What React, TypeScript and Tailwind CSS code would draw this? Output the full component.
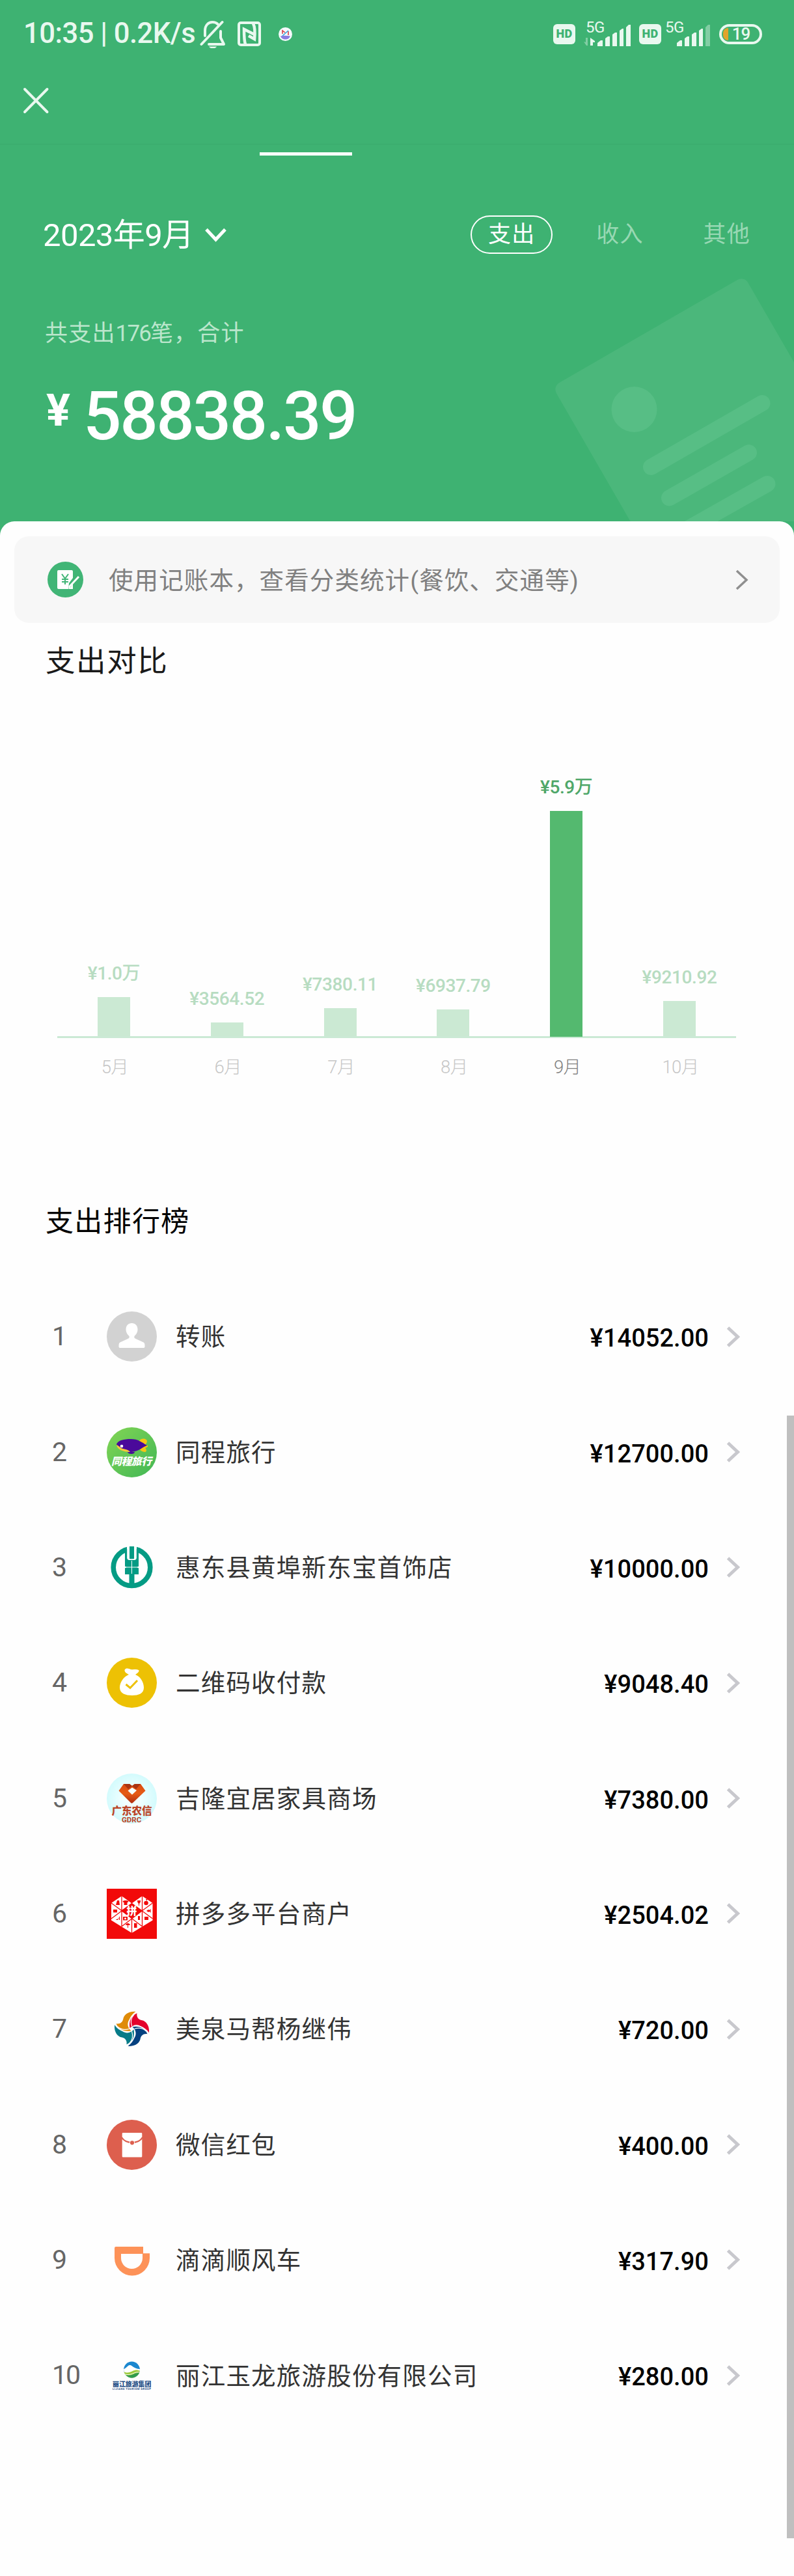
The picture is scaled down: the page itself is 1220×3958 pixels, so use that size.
import React from "react";

const FONT = "font-['Roboto','Noto_Sans_CJK_SC',sans-serif]";

/* ---------- status bar ---------- */

function MutedBell() {
  return (
    <svg width="40" height="44" viewBox="0 0 40 44" fill="none" stroke="#e9f8ef" strokeWidth="4" strokeLinecap="round" strokeLinejoin="round">
      <path d="M8 25V17C8 9 13 4 19.500 4c3 0 6 1 8 3" />
      <path d="M32 18v10l5 10H14" />
      <path d="M2.500 38 34.500 4" />
      <path d="M14 41.500h12c-2 4-10 4-12 0z" fill="#e9f8ef" stroke="none" />
    </svg>
  );
}

function NfcMark() {
  return (
    <svg width="36" height="38" viewBox="0 0 36 38" fill="none" stroke="#e9f8ef" strokeWidth="4">
      <rect x="2" y="2" width="32" height="34" rx="3" />
      <path d="M12 35C10 29 10 22 10 12l16 8" strokeWidth="4.500" />
      <path d="M24 3c3 6 3 14 2 24l-9-5" strokeWidth="4.500" />
    </svg>
  );
}

function HdBadge() {
  return (
    <div className="flex h-[31px] w-[34px] items-center justify-center rounded-[6px] bg-[#e9f8ef] text-[18px] leading-none font-black tracking-[0.3px] text-[#3eb272]">
      HD
    </div>
  );
}

function Signal({ last, arrows }: { last: string; arrows?: boolean }) {
  return (
    <div className="relative h-[38px] w-[72px]">
      <span className="absolute top-0 left-[3px] text-[24px] leading-[18px] tracking-[-0.5px] text-[#e9f8ef]">5G</span>
      <svg className="absolute inset-0" width="72" height="38" viewBox="0 0 72 38" fill="#e9f8ef">
        {arrows && (
          <>
            <path d="M6 25v12H4L0 31l3 1V25z" opacity=".4" />
            <path d="M10 37V25l7 5v2h-3v5z" />
          </>
        )}
        <path d="M21 33 26 29h3v9h-8z" />
        <path d="M33 26 37 23h3v15h-7z" />
        <path d="M44 20 48 17h3v21h-7z" />
        <path d="M55 14 59 11h2v27h-6z" />
        <path d="M65 9 69 5h3v33h-7z" opacity={last} />
      </svg>
    </div>
  );
}

function StatusBar() {
  return (
    <div className="flex h-[104px] items-center pr-[49px] pl-[36px]">
      <span className="w-[271px] text-[43.500px] leading-none font-medium tracking-[-0.500px] whitespace-nowrap text-[#e9f8ef]">10:35 | 0.2K/s</span>
      <MutedBell />
      <div className="ml-[18px]">
        <NfcMark />
      </div>
      <svg className="ml-[27px]" width="21" height="21" viewBox="0 0 21 21">
        <circle cx="10.500" cy="10.500" r="10.500" fill="#f6fafd" />
        <path d="M3 13.500c4-1 10-1 15 0-1 3-4 5-7.500 5S4 17 3 13.500z" fill="#8b7be0" />
        <path d="M6 10V5l4 3M15 6v6" stroke="#d8323c" strokeWidth="1.500" fill="none" />
        <path d="M6 13 15 5" stroke="#3aa5dc" strokeWidth="1.600" />
      </svg>
      <div className="ml-auto flex items-center">
        <HdBadge />
        <div className="ml-[13px]">
          <Signal last="1" arrows />
        </div>
        <div className="ml-[13px]">
          <HdBadge />
        </div>
        <div className="ml-[3px]">
          <Signal last=".4" />
        </div>
        <div className="relative ml-[14px] flex h-[31px] w-[66px] items-center overflow-hidden rounded-full border-4 border-[#e9f8ef]">
          <div className="absolute top-[2px] left-[2px] h-[19px] w-[8px] rounded-l-full bg-[#e2a42c]" />
          <span className="w-full pl-[1px] text-center text-[26px] leading-none font-medium tracking-[-1px] text-[#e9f8ef]">19</span>
        </div>
      </div>
    </div>
  );
}

/* ---------- green header ---------- */

function DocumentArt() {
  return (
    <svg className="absolute right-0 bottom-0" width="370" height="380" viewBox="850 421 370 380">
      <rect x="0" y="0" width="340" height="420" rx="12" fill="#4bb77b" transform="translate(849 594) rotate(-30)" />
      <circle cx="974.500" cy="629" r="35" fill="#57be85" />
      <g stroke="#57be85" strokeWidth="25" strokeLinecap="round">
        <path d="M1000.500 717.500 1171 619.500" />
        <path d="M1028.500 765 1150.500 695.500" />
        <path d="M1040 822 1179 743.500" />
      </g>
    </svg>
  );
}

function Header() {
  return (
    <header className="relative h-[801px] bg-[#3eb272] text-white">
      <DocumentArt />
      <div className="relative">
        <StatusBar />
        <div className="h-[118px] border-b border-[#3bab6c] pt-[30px] pl-[35px]">
          <svg width="41" height="41" viewBox="0 0 41 41" stroke="#e9f8ef" strokeWidth="4" strokeLinecap="round">
            <path d="M3 3 37.500 38M37.500 3 3 38" />
          </svg>
        </div>
        <div className="mt-[12px] ml-[399px] h-[5px] w-[142px] bg-white" />

        <div className="mt-[92px] flex h-[59px] items-center pr-[67px] pl-[66px]">
          <span className="pt-[2px] text-[49px] leading-none tracking-[-0.600px]">2023年9月</span>
          <svg className="ml-[17px]" width="33" height="22" viewBox="0 0 33 22" fill="none" stroke="#fff" strokeWidth="5">
            <path d="M2 2.500 16.500 18 31 2.500" />
          </svg>
          <div className="ml-auto flex items-center text-[35px] leading-none tracking-[1.200px] text-[#98d8b3]">
            <span className="flex h-[59px] w-[126px] items-center justify-center rounded-full border-2 border-white text-white">支出</span>
            <span className="ml-[67px]">收入</span>
            <span className="ml-[92px]">其他</span>
          </div>
        </div>

        <p className="mt-[104px] ml-[69px] text-[35px] leading-[38px] tracking-[1.200px] text-[#bbe6cc]">
          共支出<span className="tracking-[-1.900px]">176</span>笔，合计
        </p>
        <div className="mt-[63px] ml-[71px] flex h-[90px] items-start">
          <span className="w-[57px] pt-[1px] text-[69px] leading-[70px] font-bold">¥</span>
          <span className="text-[103px] leading-[90px] font-medium tracking-[-2.400px]">58838.39</span>
        </div>
      </div>
    </header>
  );
}

function LedgerBanner() {
  return (
    <div className="mx-[22px] flex h-[133px] items-center rounded-[22px] bg-[#f7f7f7] pr-[48px] pl-[51px]">
      <svg width="55" height="55" viewBox="0 0 55 55">
        <circle cx="27.500" cy="27.500" r="27.500" fill="#41b576" />
        <path d="M17 13h20a2 2 0 0 1 2 2v10l-6 8-1 9H17a2 2 0 0 1-2-2V15a2 2 0 0 1 2-2z" fill="#fff" />
        <path d="M48 23 34 38v4" stroke="#fff" strokeWidth="3" fill="none" />
        <path d="M39 33v9h-5z" fill="#fff" />
        <path d="M22 19l5 7 5-7M27 26v9M22 27h10M22 31h10" stroke="#41b576" strokeWidth="2" fill="none" />
      </svg>
      <span className="ml-[39px] pt-[4px] text-[37.500px] leading-none tracking-[1.100px] text-[#808080]">使用记账本，查看分类统计(餐饮、交通等)</span>
      <svg className="ml-auto" width="20" height="32" viewBox="0 0 20 32" fill="none" stroke="#8f8f8f" strokeWidth="3.500">
        <path d="M2 2 17 16 2 30" />
      </svg>
    </div>
  );
}

/* ---------- bar chart ---------- */

const months = [
  { label: "5月", value: "¥1.0万", height: 60 },
  { label: "6月", value: "¥3564.52", height: 21 },
  { label: "7月", value: "¥7380.11", height: 43 },
  { label: "8月", value: "¥6937.79", height: 41 },
  { label: "9月", value: "¥5.9万", height: 347, active: true },
  { label: "10月", value: "¥9210.92", height: 54 },
];

function SpendingChart() {
  return (
    <div className="mt-[137px] ml-[88px] w-[1043px]">
      <div className="flex h-[418px] items-end border-b-[3px] border-[#cbe9d5]">
        {months.map((m) => (
          <div key={m.label} className="flex flex-1 flex-col items-center">
            <span className={"pb-[21px] text-[28px] leading-[30px] font-medium tracking-[-0.400px] whitespace-nowrap " + (m.active ? "text-[#4fa769]" : "text-[#b7dcc1]")}>{m.value}</span>
            <div className={"w-[50px] " + (m.active ? "-mb-[1px] bg-[#54b96f]" : "bg-[#cbe9d3]")} style={{ height: m.height }} />
          </div>
        ))}
      </div>
      <div className="mt-[28px] flex text-[27.500px] leading-[34px] font-light tracking-[-0.600px]">
        {months.map((m) => (
          <span key={m.label} className={"flex-1 pl-[3px] text-center " + (m.active ? "text-[#808080]" : "text-[#c6c6c6]")}>
            {m.label}
          </span>
        ))}
      </div>
    </div>
  );
}

/* ---------- merchant logos ---------- */

function Logo({ children }: { children: React.ReactNode }) {
  return (
    <svg width="77" height="77" viewBox="0 0 77 77" className="shrink-0">
      {children}
    </svg>
  );
}

const Person = (
  <Logo>
    <circle cx="38.500" cy="38.500" r="38.500" fill="#d2d2d2" />
    <path d="M38.500 18c5.500 0 9 4 9 9.500 0 5-2.500 8-5 10.500-.6 2 0 3 2 4l12 5.500c1.500 1 2 2.500 2 5V54c0 1.500-1 2-2 2h-36c-1 0-2-.5-2-2v-1.500c0-2.500.5-4 2-5l12-5.500c2-1 2.600-2 2-4-2.500-2.500-5-5.500-5-10.500 0-5.500 3.500-9.500 9-9.500z" fill="#fff" />
  </Logo>
);

const Tongcheng = (
  <Logo>
    <defs>
      <linearGradient id="tc" x1="0" y1="0" x2="1" y2="1">
        <stop offset="0.100" stopColor="#7cd254" />
        <stop offset="0.900" stopColor="#47ba56" />
      </linearGradient>
    </defs>
    <circle cx="38.500" cy="38.500" r="38.500" fill="url(#tc)" />
    <path d="M50 21c3-5 11-4 12 0 0 3-2 5-4 7h5c1 2-2 3-4 4 3 2 2 6 0 6-4 0-8-3-10-6z" fill="#f8c513" />
    <path d="M15 26c2-6 12-8 22-8 11 0 17 5 25 10-7 2-12 9-24 10-12 0-22-5-23-12z" fill="#4a0a9a" />
    <path d="M15 27c5 2 6 5 10 6 4 1 8 1 11 5-11 0-20-4-21-11z" fill="#f8c93a" />
    <path d="M32 38h11c0 4-10 4-11 0z" fill="#4a0a9a" />
    <circle cx="23" cy="29" r="2.300" fill="#fff" />
    <text x="7" y="58" fontSize="15.800" fontWeight="900" fontStyle="italic" fill="#fff" textLength="62">同程旅行</text>
  </Logo>
);

const AgriBank = (
  <Logo>
    <circle cx="38.500" cy="38.200" r="28.300" fill="none" stroke="#049b84" strokeWidth="7.600" />
    <path d="M31 4h15v22H31z" fill="#fff" />
    <path d="M28 10h3.200v14c0 1.500 1.500 3 3 3h8.600c1.500 0 3-1.500 3-3V10H49v39H28z" fill="#049b84" />
    <path d="M34.800 6h7.400v18c0 1-.6 1.500-1.500 1.500h-4.400c-.9 0-1.500-.5-1.500-1.500z" fill="#049b84" />
    <path d="M32.200 6h1.800v18c0 1.500 1 2.300 2.300 2.300h4.400c1.300 0 2.300-.8 2.300-2.300V6h1.800" stroke="#fff" strokeWidth="1.500" fill="none" />
    <path d="M34.500 48h8v20h-8z" fill="#049b84" />
    <path d="M28 38h21M38.500 28v20" stroke="#fff" strokeWidth="1" />
    <path d="M27 36l3.500 2L27 40zM50 36l-3.500 2 3.500 2z" fill="#fff" />
  </Logo>
);

const MoneyBag = (
  <Logo>
    <circle cx="38.500" cy="38.500" r="38.500" fill="#edc104" />
    <path d="M28 18c3-3 6-1 9 0 4 1 8-1 12 1 2 2-2 5-5 7 8 3 13 12 13 20 0 9-8 12-18 12S20 55 20 46c0-8 6-17 14-20-4-2-8-5-6-8z" fill="#fff" />
    <path d="M29.500 41 36 46.500 47 35" fill="none" stroke="#edc104" strokeWidth="3" />
  </Logo>
);

const RuralCredit = (
  <Logo>
    <defs>
      <radialGradient id="rc">
        <stop offset="0.300" stopColor="#f2ffff" />
        <stop offset="1" stopColor="#d3fbfd" />
      </radialGradient>
      <linearGradient id="gem" x1="0" y1="0" x2="0" y2="1">
        <stop offset="0" stopColor="#d94a10" />
        <stop offset="0.500" stopColor="#e65c16" />
        <stop offset="1" stopColor="#b02c10" />
      </linearGradient>
    </defs>
    <circle cx="38.500" cy="38.500" r="38.500" fill="url(#rc)" />
    <path d="M26 16h9l4 3 4-3h9l7.500 10.500L40 45c-1 1-2 1-3 0L18.500 26.500z" fill="url(#gem)" />
    <path d="M26 16l7 8 6-5-4-3zM52 16l-7 8-6-5 4-3z" fill="#a93412" />
    <path d="M39 21.500 46 26l-7 6.500-6.500-6z" fill="#f6ffff" />
    <text x="7.500" y="63" fontSize="15.500" fontWeight="900" fill="#bb4528">广东农信</text>
    <text x="23" y="75" fontSize="11.500" fontWeight="700" fill="#bb4528">GDRC</text>
  </Logo>
);

const Pinduoduo = (
  <Logo>
    <path d="M0 0h77v77H0z" fill="#f20a0a" />
    <path d="M7 22 23 11.300 38.500 22.500 54.500 11.300 70.500 22v26.500L38.500 68 7 48.500z" fill="#fff" />
    <path d="M38.500 22.500 55 33.700 38.500 45.500 22 33.700z" fill="#f20a0a" />
    <path d="M23 11v47M54.500 11v47M38.500 45v23M7 22l16 11.700L54.500 58M70.500 22 54.500 33.700 23 58M7 46l31.500-23.500M70.500 46 38.500 22.500" stroke="#f20a0a" strokeWidth="1.300" fill="none" />
    <g fill="#f20a0a">
      <path d="M16 18h3l1 7h-6zM24.500 19l3-1h3l3 1-1 2h-1v4h-5v-4h-1z" />
      <path d="M47 18h5c0 3-1 4-2 5v3h-1v-3c-1-1-2-2-2-5z" />
      <circle cx="60.500" cy="22" r="3.300" />
      <path d="M60 16l1.500 3 1-3z" />
      <rect x="10" y="32" width="6" height="4.500" />
      <path d="M61 34l3-2 1.500 1 2-2v6l-2-2-1.500 1z" />
      <path d="M15 47c3 0 4-3 5-5v6h-1v-3l-2 3h-3z" />
      <rect x="25" y="43" width="7" height="5.500" />
      <path d="M48 42h3v6h-3zM58 43h6v5h-6z" />
      <path d="M29 56c1-4 6-4 7 0h-3v4h-1v-4zM42 53h4.500v7H42z" />
    </g>
    <circle cx="28.500" cy="45.700" r="1.500" fill="#fff" />
    <text x="30.500" y="39.500" fontSize="16" fontWeight="900" fill="#fff">拼</text>
  </Logo>
);

function Blade({ color, turn }: { color: string; turn: string }) {
  return (
    <g transform={turn}>
      <path d="M6-26.500C-6-27.500-12-21-13-16-14-10-18-7-24-8-20 1-12 5-1 3-6-1-8-8-4-14-2-19 1-23 6-26.500z" fill={color} />
      <path d="M-22-3.500C-17 1-10 2-4 0" stroke="#fff" strokeWidth="1.200" fill="none" />
    </g>
  );
}

const Pinwheel = (
  <Logo>
    <g transform="translate(38.500 38.300)">
      <Blade color="#df8b08" turn="rotate(0)" />
      <Blade color="#e4022c" turn="rotate(90)" />
      <Blade color="#05417f" turn="rotate(180)" />
      <Blade color="#067b88" turn="rotate(270)" />
    </g>
  </Logo>
);

const RedPacket = (
  <Logo>
    <circle cx="38.500" cy="38.500" r="38.500" fill="#dd5f4e" />
    <path d="M25 20h28a1.300 1.300 0 0 1 1.300 1.300v35a1.300 1.300 0 0 1-1.300 1.300H25a1.300 1.300 0 0 1-1.300-1.300v-35A1.300 1.300 0 0 1 25 20z" fill="#fff" />
    <path d="M23 27c6 10.500 26 10.500 32 0" fill="none" stroke="#dd5f4e" strokeWidth="2.200" />
    <circle cx="39" cy="35.300" r="4" fill="#fff" />
    <circle cx="39" cy="35.300" r="3.100" fill="#dd5f4e" />
  </Logo>
);

const Didi = (
  <Logo>
    <path fillRule="evenodd" d="M14 18h42v10.300h10V35.500a27 27 0 0 1-54 0V20a2 2 0 0 1 2-2zM22 29v6.500a16.500 16.500 0 0 0 33 0V29z" fill="#fd9258" />
  </Logo>
);

const Lijiang = (
  <Logo>
    <clipPath id="globe">
      <circle cx="38.500" cy="30" r="12.400" />
    </clipPath>
    <g clipPath="url(#globe)">
      <path d="M26 17h25v26H26z" fill="#1b87cf" />
      <path d="M26 29c4-1 7-7 10-6 3 0 6 6 15 6v14H26z" fill="#fff" />
      <path d="M26 33c6 3 9 1 14-1 4-2 7-2 11 0v11H26z" fill="#9ccb3c" />
      <path d="M26 38c7 1 11 1 15-1 4-2 7-2 10-3v9H26z" fill="#2f9b4e" />
      <path d="M26 36.500c7 2 11 1 15-1 3-1.500 6-2 10-1.500" stroke="#fff" fill="none" />
    </g>
    <text x="9" y="56" fontSize="9.900" fontWeight="900" fill="#1f4d84">丽江旅游集团</text>
    <text x="9" y="60.800" fontSize="4.200" fontWeight="700" fill="#1f4d84" textLength="59">LIJIANG TOURISM GROUP</text>
  </Logo>
);

/* ---------- ranking list ---------- */

const ranking = [
  { name: "转账", amount: "¥14052.00", logo: Person },
  { name: "同程旅行", amount: "¥12700.00", logo: Tongcheng },
  { name: "惠东县黄埠新东宝首饰店", amount: "¥10000.00", logo: AgriBank },
  { name: "二维码收付款", amount: "¥9048.40", logo: MoneyBag },
  { name: "吉隆宜居家具商场", amount: "¥7380.00", logo: RuralCredit },
  { name: "拼多多平台商户", amount: "¥2504.02", logo: Pinduoduo },
  { name: "美泉马帮杨继伟", amount: "¥720.00", logo: Pinwheel },
  { name: "微信红包", amount: "¥400.00", logo: RedPacket },
  { name: "滴滴顺风车", amount: "¥317.90", logo: Didi },
  { name: "丽江玉龙旅游股份有限公司", amount: "¥280.00", logo: Lijiang },
];

function RankingList() {
  return (
    <ol>
      {ranking.map((r, i) => (
        <li key={r.name} className="flex h-[177.350px] items-center pr-[82px] pl-[79px]">
          <span className="w-[85px] shrink-0 pl-[1px] text-[41px] leading-none tracking-[-2px] text-[#666]">{i + 1}</span>
          {r.logo}
          <span className="ml-[29px] pt-[3px] text-[37.500px] leading-none tracking-[1.200px] text-[#333]">{r.name}</span>
          <span className="ml-auto pt-[5px] text-[38px] leading-none font-medium tracking-[0.050px] text-black">{r.amount}</span>
          <svg className="ml-[27px]" width="22" height="34" viewBox="0 0 22 34" fill="none" stroke="#c8c8cd" strokeWidth="5">
            <path d="M2.500 3 17.500 17 2.500 31" />
          </svg>
        </li>
      ))}
    </ol>
  );
}

export default function App() {
  return (
    <div className={"relative h-[3958px] w-[1220px] overflow-hidden bg-[#3eb272] " + FONT}>
      <Header />
      <main className="h-[3157px] rounded-t-[22px] bg-[#fefefe] pt-[23px]">
        <LedgerBanner />
        <h2 className="mt-[37px] ml-[70px] text-[45.500px] leading-[46px] tracking-[1.600px] text-[#1a1a1a]">支出对比</h2>
        <SpendingChart />
        <h2 className="mt-[197px] mb-[65px] ml-[70px] text-[43px] leading-[46px] tracking-[1.300px] text-black">支出排行榜</h2>
        <RankingList />
      </main>
      <div className="absolute top-[2175px] right-0 h-[1725px] w-[11px] bg-[#bfbfbf]" />
    </div>
  );
}
